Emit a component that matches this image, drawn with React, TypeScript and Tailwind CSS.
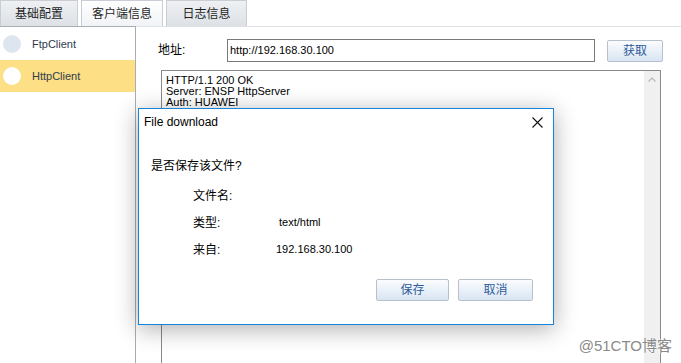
import React from "react";

const cjk = "font-['Liberation_Sans','Noto_Sans_CJK_SC',sans-serif]";

function Tab({ label, width, active }: { label: string; width: string; active?: boolean }) {
  return (
    <div
      className={`${width} h-[26px] flex items-center justify-center border border-b-0 border-[#c9ced5] text-[12px] text-[#1f1f1f] ${
        active ? "bg-gradient-to-b from-white to-[#f1f3f6]" : "bg-gradient-to-b from-[#eef0f3] to-[#dde1e6]"
      }`}
    >
      {label}
    </div>
  );
}

function ClientRow({ name, active }: { name: string; active?: boolean }) {
  return (
    <div className={`h-[32px] flex items-center pl-[3px] ${active ? "bg-[#fddf85]" : ""}`}>
      <div className={`w-[18px] h-[18px] rounded-full ${active ? "bg-white" : "bg-[#dde5ef]"}`} />
      <span className="ml-[11px] text-[11px] text-[#2e3b4e]">{name}</span>
    </div>
  );
}

function WinButton({ label, width }: { label: string; width: string }) {
  return (
    <button
      className={`${width} h-[22px] rounded-[2px] border border-[#b8c0cb] bg-gradient-to-b from-[#fbfcfe] to-[#d9e5f3] text-[12px] text-[#2d5c99]`}
    >
      {label}
    </button>
  );
}

export default function App() {
  return (
    <div className={`relative w-[681px] h-[363px] overflow-hidden bg-white ${cjk}`}>
      <div className="flex gap-[3px] h-[26px]">
        <Tab label="基础配置" width="w-[78px]" />
        <Tab label="客户端信息" width="w-[82px]" active />
        <Tab label="日志信息" width="w-[81px]" />
      </div>

      <div className="flex h-[337px]">
        <div className="w-[136px] border-t border-r border-[#a9adb3] pt-[1px]">
          <ClientRow name="FtpClient" />
          <ClientRow name="HttpClient" active />
        </div>

        <div className="flex-1 border-t border-[#dfe2e6]">
          <div className="flex items-center mt-[12px] pl-[22px] h-[22px]">
            <span className="w-[69px] text-[12px] text-black">地址:</span>
            <div className="w-[368px] h-[23px] border border-[#7a7a7a] flex items-center pl-[2px] text-[11px] text-black">
              http://192.168.30.100
            </div>
            <div className="ml-[12px]">
              <WinButton label="获取" width="w-[56px]" />
            </div>
          </div>

          <div className="ml-[25px] mt-[9px] w-[500px] h-[300px] border border-[#8a8a8a] flex">
            <div className="flex-1 pl-[4px] pt-[4px] text-[11px] leading-[11px] text-black">
              <div>HTTP/1.1 200 OK</div>
              <div>Server: ENSP HttpServer</div>
              <div>Auth: HUAWEI</div>
            </div>
            <div className="w-[16px] bg-[#f0f0f0] flex justify-center pt-[6px]">
              <svg width="8" height="5" viewBox="0 0 8 5">
                <path d="M0.5 4.5 L4 1 L7.5 4.5" fill="none" stroke="#b8b8b8" strokeWidth="1.2" />
              </svg>
            </div>
          </div>
        </div>
      </div>

      <div className="absolute left-[138px] top-[108px] w-[416px] h-[217px] bg-white border border-[#1883d7] shadow-[0_4px_22px_rgba(0,0,0,0.32)] flex flex-col">
        <div className="flex items-center justify-between h-[26px] pl-[5px] pr-[10px]">
          <span className="text-[12px] text-black">File download</span>
          <svg width="11" height="11" viewBox="0 0 11 11">
            <path d="M0.5 0.5 L10.5 10.5 M10.5 0.5 L0.5 10.5" stroke="#111" strokeWidth="1.1" />
          </svg>
        </div>
        <div className="pl-[12px] mt-[22px] text-[12px] text-black">是否保存该文件?</div>
        <div className="pl-[54px] mt-[13px] flex flex-col gap-[12px] text-[12px] text-black">
          <div className="flex h-[15px] items-center">
            <span className="w-[86px]">文件名:</span>
          </div>
          <div className="flex h-[15px] items-center">
            <span className="w-[86px]">类型:</span>
            <span className="text-[11px]">text/html</span>
          </div>
          <div className="flex h-[15px] items-center">
            <span className="w-[83px]">来自:</span>
            <span className="text-[11px]">192.168.30.100</span>
          </div>
        </div>
        <div className="flex justify-end gap-[9px] pr-[20px] mt-[22px]">
          <WinButton label="保存" width="w-[73px]" />
          <WinButton label="取消" width="w-[75px]" />
        </div>
      </div>

      <div className="absolute right-[9px] top-[335px] text-[15px] text-[#8a8a8a] [text-shadow:0_0_2px_#fff,0_0_2px_#fff] font-['Liberation_Sans','Noto_Sans_CJK_SC',sans-serif]">
        @51CTO博客
      </div>
    </div>
  );
}
